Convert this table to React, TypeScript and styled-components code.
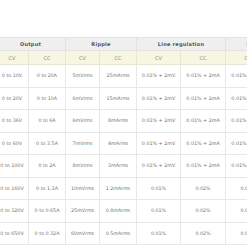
import React from "react";
import styled, { createGlobalStyle } from "styled-components";

const Global = createGlobalStyle`
  html, body { margin: 0; padding: 0; background: #fff; }
  body { font-family: "DejaVu Sans", Verdana, sans-serif; }
`;

const Viewport = styled.div`
  width: 247px;
  height: 247px;
  overflow: hidden;
  padding-top: 37px;
  box-sizing: border-box;
`;

const Table = styled.table`
  border-collapse: collapse;
  table-layout: fixed;
  width: 320px;
  margin-left: -5px;
  font-size: 4.8px;
  color: #727272;
`;

const GroupCell = styled.th`
  height: 12px;
  padding: 0;
  background: #efefef;
  color: #555;
  font-weight: bold;
  font-size: 5px;
  letter-spacing: 0.25px;
  border: 1px solid #e2e2e2;
  white-space: nowrap;
  overflow: hidden;
`;

const SubCell = styled.th`
  height: 13px;
  padding: 0;
  background: #f6f6e2;
  color: #888;
  font-weight: normal;
  font-size: 5px;
  border: 1px solid #e6e6d6;
  white-space: nowrap;
  overflow: hidden;
`;

const Cell = styled.td`
  height: 21.5px;
  padding: 0;
  text-align: center;
  white-space: nowrap;
  overflow: hidden;
  border: 1px solid #e8e8e8;
`;

const widths = [33, 37, 34, 37, 44, 45, 45, 45];

const rows = [
  ["0 to 10V", "0 to 20A", "5mVrms", "25mArms", "0.01% + 2mV", "0.01% + 2mA", "0.01% + 2mV"],
  ["0 to 20V", "0 to 10A", "6mVrms", "15mArms", "0.01% + 2mV", "0.01% + 2mA", "0.01% + 2mV"],
  ["0 to 36V", "0 to 6A", "6mVrms", "8mArms", "0.01% + 2mV", "0.01% + 2mA", "0.01% + 2mV"],
  ["0 to 60V", "0 to 3.5A", "7mVrms", "4mArms", "0.01% + 2mV", "0.01% + 2mA", "0.01% + 2mV"],
  ["0 to 100V", "0 to 2A", "8mVrms", "3mArms", "0.01% + 2mV", "0.01% + 2mA", "0.01% + 2mV"],
  ["0 to 160V", "0 to 1.3A", "10mVrms", "1.2mArms", "0.01%", "0.02%", "0.01%"],
  ["0 to 320V", "0 to 0.65A", "25mVrms", "0.8mArms", "0.01%", "0.02%", "0.01%"],
  ["0 to 650V", "0 to 0.32A", "60mVrms", "0.5mArms", "0.01%", "0.02%", "0.01%"],
];

export default function App() {
  return (
    <>
      <Global />
      <Viewport>
        <Table>
          <colgroup>
            {widths.map((w, i) => (
              <col key={i} style={{ width: w }} />
            ))}
          </colgroup>
          <thead>
            <tr>
              <GroupCell colSpan={2}>Output</GroupCell>
              <GroupCell colSpan={2}>Ripple</GroupCell>
              <GroupCell colSpan={2}>Line regulation</GroupCell>
              <GroupCell colSpan={2}>Load regulation</GroupCell>
            </tr>
            <tr>
              {["CV", "CC", "CV", "CC", "CV", "CC", "CV", "CC"].map((t, i) => (
                <SubCell key={i}>{t}</SubCell>
              ))}
            </tr>
          </thead>
          <tbody>
            {rows.map((r, i) => (
              <tr key={i}>
                {r.map((c, j) => (
                  <Cell key={j}>{c}</Cell>
                ))}
                <Cell>{r[5]}</Cell>
              </tr>
            ))}
          </tbody>
        </Table>
      </Viewport>
    </>
  );
}
